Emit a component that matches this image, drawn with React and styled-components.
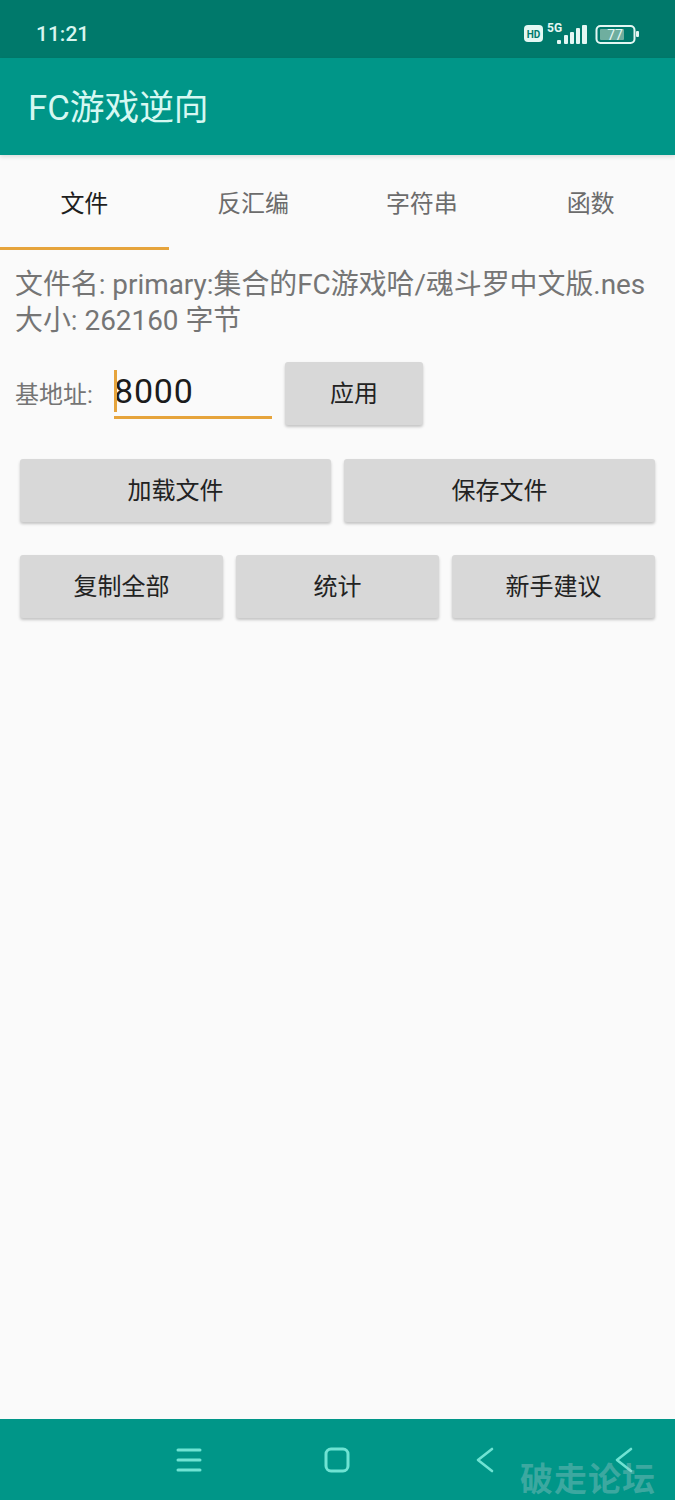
import styled, { createGlobalStyle } from 'styled-components';

const GlobalStyle = createGlobalStyle`
  html, body {
    margin: 0;
    padding: 0;
    background: #fafafa;
    font-family: Roboto, "Noto Sans CJK SC", sans-serif;
  }
`;

const Page = styled.div`
  width: 675px;
  height: 1500px;
  display: flex;
  flex-direction: column;
  overflow: hidden;
  position: relative;
`;

const StatusBar = styled.div`
  height: 58px;
  flex: none;
  background: #00796b;
  display: flex;
  align-items: center;
  justify-content: space-between;
  padding: 0 35px 0 36px;
  box-sizing: border-box;
  color: #d8f5ef;
`;

const Clock = styled.span`
  font-size: 21px;
  font-weight: 500;
  position: relative;
  top: 5px;
`;

const StatusIcons = styled.svg`
  display: block;
  position: relative;
  top: 4px;
`;

const AppBar = styled.div`
  height: 97px;
  flex: none;
  padding: 0 0 4px 28px;
  box-sizing: border-box;
  background: #009688;
  color: #d6f8f2;
  display: flex;
  align-items: center;
  font-size: 34.7px;
  box-shadow: 0 2px 4px rgba(0, 0, 0, 0.12);
  position: relative;
  z-index: 1;
`;

const Tabs = styled.div`
  height: 95px;
  flex: none;
  display: grid;
  grid-template-columns: repeat(4, 1fr);
`;

const Tab = styled.div`
  display: flex;
  align-items: center;
  justify-content: center;
  font-size: 24px;
  color: ${p => (p.$active ? '#1e1e1e' : '#6c6c6c')};
  border-bottom: 3px solid ${p => (p.$active ? '#e6a43c' : 'transparent')};
`;

const Main = styled.div`
  flex: 1;
  padding: 17px 20px 0 15px;
`;

const Info = styled.div`
  font-size: 27.9px;
  line-height: 36px;
  color: #757575;
  white-space: nowrap;
`;

const BaseRow = styled.div`
  display: flex;
  align-items: flex-start;
  margin-top: 23px;
`;

const BaseLabel = styled.span`
  width: 99px;
  height: 63px;
  display: flex;
  align-items: center;
  padding-bottom: 2px;
  box-sizing: border-box;
  font-size: 24px;
  color: #757575;
`;

const BaseInput = styled.div`
  width: 158px;
  height: 57px;
  box-sizing: border-box;
  border-bottom: 3px solid #e6a43c;
  margin-right: 13px;
  padding-top: 9px;
  font-size: 34px;
  letter-spacing: 0.8px;
  color: #1c1c1c;
  position: relative;
`;

const Caret = styled.span`
  position: absolute;
  left: 0;
  top: 8px;
  width: 3px;
  height: 42px;
  background: #e6a43c;
`;

const Btn = styled.div`
  height: 63px;
  padding-bottom: 4px;
  box-sizing: border-box;
  background: #d8d8d8;
  border-radius: 3px;
  box-shadow: 0 2px 3px rgba(0, 0, 0, 0.22);
  display: flex;
  align-items: center;
  justify-content: center;
  font-size: 24px;
  color: #222;
`;

const ApplyBtn = styled(Btn)`
  width: 138px;
`;

const BtnRow = styled.div`
  display: grid;
  grid-template-columns: repeat(${p => p.$cols}, 1fr);
  gap: 13px;
  margin-top: ${p => p.$top}px;
  margin-left: 5px;
`;

const NavBar = styled.div`
  height: 81px;
  flex: none;
  background: #009688;
  position: relative;
  display: flex;
  align-items: center;
  padding-left: 176px;
  box-sizing: border-box;
`;

const NavIcon = styled.svg`
  display: block;
  flex: none;
  margin-left: ${p => p.$gap || 0}px;
`;

const Watermark = styled.span`
  position: absolute;
  left: 520px;
  top: 42px;
  font-size: 33px;
  line-height: 38px;
  font-weight: 700;
  letter-spacing: 1px;
  color: rgba(160, 200, 200, 0.38);
`;

const tabs = ['文件', '反汇编', '字符串', '函数'];

export default function App() {
  return (
    <Page>
      <GlobalStyle />
      <StatusBar>
        <Clock>11:21</Clock>
        <StatusIcons width="116" height="24" viewBox="0 0 116 24" fill="none">
          <rect x="0" y="4" width="19" height="17" rx="4" fill="#e4f7f3" />
          <text x="9.5" y="16.5" textAnchor="middle" fontSize="10" fontWeight="700" fontFamily="Roboto" fill="#00796b">HD</text>
          <text x="23" y="11" fontSize="12" fontWeight="700" fontFamily="Roboto" fill="#e4f7f3">5G</text>
          <g fill="#e4f7f3">
            <rect x="33" y="19" width="4" height="4" rx="1" />
            <rect x="40" y="14" width="4" height="9" rx="1" />
            <rect x="46" y="11" width="4" height="12" rx="1" />
            <rect x="52" y="7" width="4" height="16" rx="1" />
            <rect x="58" y="4" width="5" height="19" rx="1" />
          </g>
          <rect x="72.5" y="5" width="38" height="17" rx="4" stroke="#e4f7f3" strokeWidth="2" />
          <rect x="76" y="8" width="24" height="11" rx="1" fill="#6fae9f" />
          <text x="91" y="19" textAnchor="middle" fontSize="14" fontFamily="Roboto" fill="#e4f7f3">77</text>
          <rect x="112" y="10" width="3" height="6" rx="1" fill="#e4f7f3" />
        </StatusIcons>
      </StatusBar>
      <AppBar>FC游戏逆向</AppBar>
      <Tabs>
        {tabs.map((t, i) => (
          <Tab key={t} $active={i === 0}>{t}</Tab>
        ))}
      </Tabs>
      <Main>
        <Info>
          文件名: primary:集合的FC游戏哈/魂斗罗中文版.nes
          <br />
          大小: 262160 字节
        </Info>
        <BaseRow>
          <BaseLabel>基地址:</BaseLabel>
          <BaseInput>
            <Caret />
            8000
          </BaseInput>
          <ApplyBtn>应用</ApplyBtn>
        </BaseRow>
        <BtnRow $cols={2} $top={34}>
          <Btn>加载文件</Btn>
          <Btn>保存文件</Btn>
        </BtnRow>
        <BtnRow $cols={3} $top={33}>
          <Btn>复制全部</Btn>
          <Btn>统计</Btn>
          <Btn>新手建议</Btn>
        </BtnRow>
      </Main>
      <NavBar>
        <NavIcon width="26" height="24" viewBox="0 0 26 24" fill="none" stroke="#6fe3d3" strokeWidth="3" strokeLinecap="round">
          <path d="M2 2h22M2 12h22M2 22h22" />
        </NavIcon>
        <NavIcon $gap={122} width="26" height="26" viewBox="0 0 26 26" fill="none" stroke="#6fe3d3" strokeWidth="3">
          <rect x="2" y="2" width="22" height="22" rx="5" />
        </NavIcon>
        <NavIcon $gap={126} width="18" height="26" viewBox="0 0 18 26" fill="none" stroke="#6fe3d3" strokeWidth="2.6" strokeLinecap="round" strokeLinejoin="round">
          <path d="M16 2L2 13l14 11" />
        </NavIcon>
        <NavIcon $gap={121} width="18" height="26" viewBox="0 0 18 26" fill="none" stroke="#6fe3d3" strokeWidth="2.6" strokeLinecap="round" strokeLinejoin="round">
          <path d="M16 2L2 13l14 11" />
        </NavIcon>
        <Watermark>破走论坛</Watermark>
      </NavBar>
    </Page>
  );
}
